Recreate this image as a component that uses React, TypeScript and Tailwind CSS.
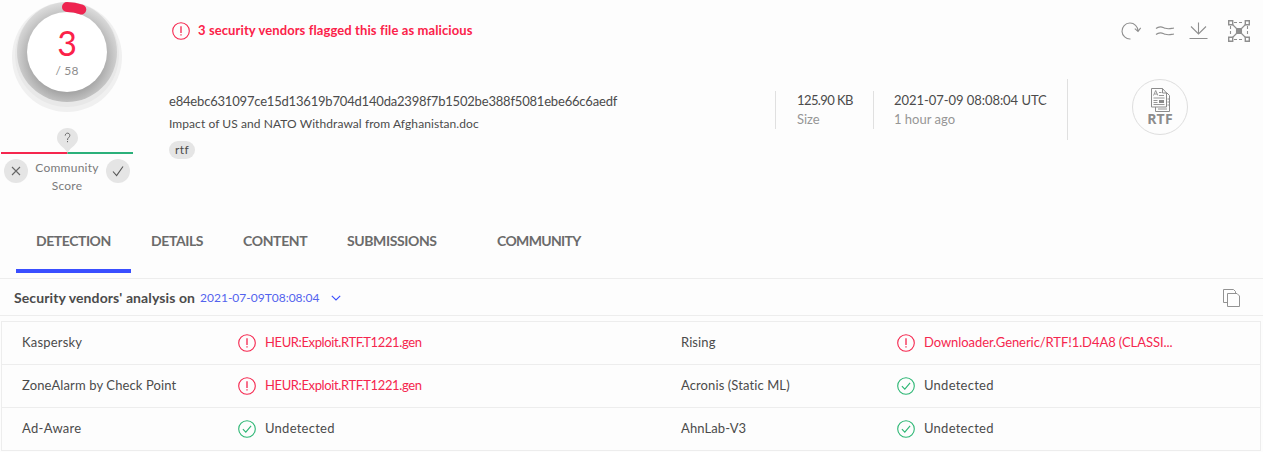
import clsx from "clsx"

interface Verdict {
  engine: string
  result: string
  malicious: boolean
  engineClass: string
  resultClass: string
}

const verdicts: Verdict[] = [
  { engine: "Kaspersky", result: "HEUR:Exploit.RTF.T1221.gen", malicious: true, engineClass: "tracking-[0.2px]", resultClass: "tracking-[-0.38px]" },
  { engine: "Rising", result: "Downloader.Generic/RTF!1.D4A8 (CLASSI...", malicious: true, engineClass: "tracking-[0.1px]", resultClass: "tracking-[-0.07px]" },
  { engine: "ZoneAlarm by Check Point", result: "HEUR:Exploit.RTF.T1221.gen", malicious: true, engineClass: "tracking-[0.12px]", resultClass: "tracking-[-0.38px]" },
  { engine: "Acronis (Static ML)", result: "Undetected", malicious: false, engineClass: "tracking-[0.1px]", resultClass: "tracking-[0.25px]" },
  { engine: "Ad-Aware", result: "Undetected", malicious: false, engineClass: "tracking-[0.3px]", resultClass: "tracking-[0.25px]" },
  { engine: "AhnLab-V3", result: "Undetected", malicious: false, engineClass: "tracking-[0.1px]", resultClass: "tracking-[0.25px]" },
]

const tabs = [
  { label: "DETECTION", className: "w-[115px] tracking-[-0.45px]" },
  { label: "DETAILS", className: "w-[92px] tracking-[-0.4px]" },
  { label: "CONTENT", className: "w-[104px] tracking-[-0.35px]" },
  { label: "SUBMISSIONS", className: "w-[150px] tracking-[-0.4px]" },
  { label: "COMMUNITY", className: "w-[124px] tracking-[-0.65px]" },
]

function AlertIcon() {
  return (
    <svg className="h-[18px] w-[18px] shrink-0" viewBox="0 0 18 18" fill="none" stroke="#f5264e" strokeWidth="1.1">
      <circle cx="9" cy="9" r="8.3" />
      <path d="M9 4.2v6.9M9 12.3v1.3" strokeWidth="1.3" />
    </svg>
  )
}

function OkIcon() {
  return (
    <svg className="h-[18px] w-[18px] shrink-0" viewBox="0 0 18 18" fill="none" stroke="#2bb673" strokeWidth="1.1">
      <circle cx="9" cy="9" r="8.3" />
      <path d="M4.9 9.2l2.9 3 5.3-6.4" />
    </svg>
  )
}

function ScoreRing() {
  return (
    <div className="relative h-[112px] w-[134px]">
      <svg className="h-full w-full" viewBox="0 0 134 112">
        <defs>
          <radialGradient id="ring" gradientUnits="userSpaceOnUse" cx="67" cy="58" r="56">
            <stop offset="0.6" stopColor="#a2a2a2" />
            <stop offset="0.75" stopColor="#bababa" />
            <stop offset="0.86" stopColor="#cbcbcb" />
            <stop offset="1" stopColor="#dedede" />
          </radialGradient>
        </defs>
        <circle cx="67" cy="57" r="55" fill="#f0f0f0" />
        <circle cx="67" cy="55" r="52" fill="#e8e8e8" />
        <circle cx="67" cy="52" r="50" fill="url(#ring)" />
        <circle cx="67" cy="52" r="40" fill="#fff" />
        <path d="M67 7A45 45 0 0 1 81.3 9.4" fill="none" stroke="#ee2450" strokeWidth="10" strokeLinecap="round" />
      </svg>
      <div className="absolute inset-0 flex flex-col items-center pt-[25px]">
        <span className="text-[34px] leading-9 text-[#fb2249]">3</span>
        <span className="mt-px text-xs leading-[18px] tracking-[0.2px] text-[#8c8c8c]">/ 58</span>
      </div>
    </div>
  )
}

function CommunityScore() {
  return (
    <div className="mt-4 w-[134px]">
      <svg className="block h-[26px] w-[134px]" viewBox="0 0 134 26">
        <path d="M1 25H67.500" stroke="#f5264e" strokeWidth="2" />
        <path d="M67.500 25H133" stroke="#2bb07a" strokeWidth="2" />
        <path d="M67.500 0C73.500 0 78 4.500 78 10C78 16.500 71.500 18.500 67.500 24.500C63.500 18.500 57 16.500 57 10C57 4.500 61.500 0 67.500 0Z" fill="#e5e5e5" />
        <path d="M65.200 7.600C65.200 4.300 70 4.400 69.800 7.500C69.700 9.600 67.500 9.500 67.500 12M67.500 13v1.200" fill="none" stroke="#666" strokeWidth="1" />
      </svg>
      <div className="mt-[5px] flex">
        <div className="ml-1 flex h-6 w-6 items-center justify-center rounded-full bg-[#e5e5e5]">
          <svg className="h-[10px] w-[10px]" viewBox="0 0 10 10" stroke="#666" strokeWidth="1.1">
            <path d="M1 1l8 8M9 1L1 9" />
          </svg>
        </div>
        <div className="w-[78px] text-center text-xs leading-[18px] tracking-[0.25px] text-[#7a7a7a]">
          Community
          <br />
          Score
        </div>
        <div className="flex h-6 w-6 items-center justify-center rounded-full bg-[#e5e5e5]">
          <svg className="h-3 w-3" viewBox="0 0 12 12" fill="none" stroke="#555" strokeWidth="1.1">
            <path d="M1 6.500l3.600 4L11 1.500" />
          </svg>
        </div>
      </div>
    </div>
  )
}

function Toolbar() {
  return (
    <div className="flex h-6 text-[#8f8f8f]">
      <svg className="h-6 w-[142px]" viewBox="0 0 142 24" fill="none" stroke="currentColor" strokeWidth="1.1">
        <path d="M10.500 20A8 8 0 1 1 18 12M14.800 9.700l3.200 2.700 2.700-3.600" />
        <path d="M36 9.500c4-3.500 6.500-1.200 9.500-.2s5 .2 8.500-.3M36 15.500c4-3.500 6.500-1.200 9.500-.2s5 .2 8.500-.3" />
        <path d="M78.500 3.500v11.500M71 7.500l7.500 7.500L86 7.500M69.500 19.500h18" />
        <path d="M110.500 7v10M127.500 7v10M114 3.500h10M114 20.500h10" strokeDasharray="3 2" />
        <path d="M111 4l16 16M127 4l-16 16" />
        <path d="M116.500 9.500h5v5h-5z" fill="currentColor" />
        <g fill="#fdfdfd" strokeWidth="1.400">
          <path d="M108.700 1.700h4v4h-4zM125.300 1.700h4v4h-4zM108.700 18.300h4v4h-4zM125.300 18.300h4v4h-4z" />
        </g>
      </svg>
    </div>
  )
}

function FileType() {
  return (
    <div className="flex h-14 w-14 flex-col items-center rounded-full border border-[#dedede] pt-2 text-[#8c8c8c]">
      <svg className="h-6 w-[19px]" viewBox="0 0 19 24" fill="none" stroke="currentColor">
        <path d="M4.500 19v4.500h14v-16l-3-3" />
        <path d="M.5.5h11l4 4.500v14H.5zM11.500.5V5h4" fill="#fdfdfd" />
        <path d="M2.500 7.500l2.200-5 2.200 5M3.500 6h2.500M8 4.500h2.500M8 7.500h5M2.500 10h11M2.500 12.500h4M2.500 14.500h4M2.500 16.500h11M16.500 11h2M16.500 14h2M16.500 17h2M7 21h9" strokeWidth=".9" />
        <path d="M8 12h5v3H8z" fill="currentColor" stroke="none" />
      </svg>
      <span className="font-[family-name:'Open_Sans'] text-[14px] leading-[14px] font-bold tracking-[0.2px]">RTF</span>
    </div>
  )
}

function VerdictCell({ verdict }: { verdict: Verdict }) {
  return (
    <div className="flex h-[43px] items-center border-b border-[#ededed] pl-5">
      <span className={clsx("w-[216px] shrink-0", verdict.engineClass)}>{verdict.engine}</span>
      {verdict.malicious ? <AlertIcon /> : <OkIcon />}
      <span className={clsx("ml-[9px] whitespace-nowrap", verdict.resultClass, verdict.malicious && "text-[#f5264e]")}>
        {verdict.result}
      </span>
    </div>
  )
}

export default function App() {
  return (
    <div className="h-[452px] w-[1263px] overflow-hidden bg-[#fdfdfd] font-[family-name:Lato,sans-serif] text-[13px] text-[#4b4b4b]">
      <header className="flex h-[209px]">
        <aside className="w-[134px] shrink-0">
          <ScoreRing />
          <CommunityScore />
        </aside>
        <div className="ml-[35px] flex flex-1 flex-col">
          <div className="flex h-[62px] items-center justify-between pr-px">
            <div className="flex items-center gap-2 pl-[3px] font-bold text-[#fb2249]">
              <AlertIcon />
              <span className="tracking-[0.1px]">3 security vendors flagged this file as malicious</span>
            </div>
            <Toolbar />
          </div>
          <div className="flex pt-[17px]">
            <div className="w-[606px] pt-[11px]">
              <p className="leading-[22px] tracking-[-0.19px] whitespace-nowrap">
                e84ebc631097ce15d13619b704d140da2398f7b1502be388f5081ebe66c6aedf
              </p>
              <p className="text-xs leading-6 tracking-[0.07px]">Impact of US and NATO Withdrawal from Afghanistan.doc</p>
              <span className="mt-[5px] block h-[18px] w-[26px] rounded-full bg-[#e5e5e5] text-center text-xs leading-[18px] tracking-[0.3px]">rtf</span>
            </div>
            <div className="mt-3 h-[38px] w-[98px] border-l border-[#e0e0e0] pl-[21px] leading-[19px]">
              <p className="tracking-[-0.6px] whitespace-nowrap">125.90 KB</p>
              <p className="text-[#969696]">Size</p>
            </div>
            <div className="mt-3 h-[38px] w-[194px] border-l border-[#e0e0e0] pl-5 leading-[19px]">
              <p className="tracking-[-0.05px] whitespace-nowrap">2021-07-09 08:08:04 UTC</p>
              <p className="text-[#969696]">1 hour ago</p>
            </div>
            <div className="h-[61px] border-l border-[#e0e0e0] pl-16">
              <FileType />
            </div>
          </div>
        </div>
      </header>

      <nav className="flex h-16 pl-4">
        {tabs.map((tab, index) => (
          <div
            key={tab.label}
            className={clsx("border-b-4 pl-5 text-[14px] leading-[64px] font-bold text-[#6b6b6b]", tab.className, index === 0 ? "border-[#394eff]" : "border-transparent")}
          >
            {tab.label}
          </div>
        ))}
      </nav>

      <section className="mt-[5px] flex h-[38px] items-center border-y border-[#ededed] pr-[23px] pl-[14px]">
        <span className="text-[14px] font-bold tracking-[0.1px]">Security vendors' analysis on</span>
        <span className="ml-[5px] pt-px text-xs text-[#5363ee]">2021-07-09T08:08:04</span>
        <svg className="mt-0.5 ml-[11px] h-[6px] w-[10px]" viewBox="0 0 10 6" fill="none" stroke="#394eff" strokeWidth="1.1">
          <path d="M.8.8L5 5 9.200.8" />
        </svg>
        <svg className="mt-0.5 ml-auto h-[18px] w-[17px]" viewBox="0 0 17 18" stroke="#929292" strokeWidth="1">
          <path d="M.5.5h10l2 2v11H.5z" fill="none" />
          <path d="M4.500 4.500h9.500l2.500 2.500v10.500h-12z" fill="#fdfdfd" />
        </svg>
      </section>

      <div className="mt-[5px] ml-px w-[1260px] border-x border-t border-[#ededed]">
        <div className="grid grid-cols-[659px_1fr]">
          {verdicts.map((verdict) => (
            <VerdictCell key={verdict.engine} verdict={verdict} />
          ))}
        </div>
      </div>
    </div>
  )
}
